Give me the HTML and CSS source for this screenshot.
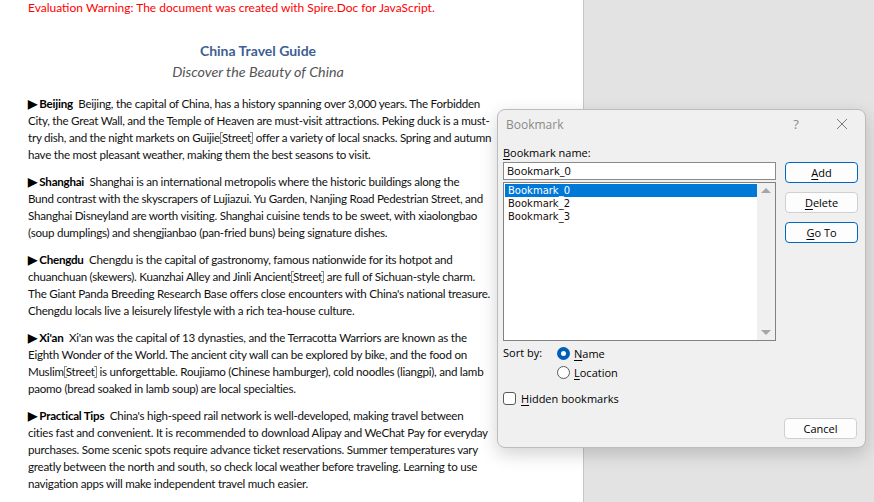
FILE: index.html
```html
<!DOCTYPE html>
<html lang="en">
<head>
    <meta charset="UTF-8">
    <meta name="viewport" content="width=device-width, initial-scale=1.0">
    <title>China Travel Guide - Bookmark</title>
    <link rel="stylesheet" href="styles.css">
</head>
<body>
    <div class="workspace">
        <main class="page">
            <p class="warning">Evaluation Warning: The document was created with Spire.Doc for JavaScript.</p>

            <h1 class="doc-title">China Travel Guide</h1>
            <p class="doc-subtitle">Discover the Beauty of China</p>

            <p class="para"><b>&#9654; Beijing</b>&nbsp; Beijing, the capital of China, has a history spanning over 3,000 years. The Forbidden<br>City, the Great Wall, and the Temple of Heaven are must-visit attractions. Peking duck is a must-<br>try dish, and the night markets on Guijie<span class="bm">Street</span> offer a variety of local snacks. Spring and autumn<br>have the most pleasant weather, making them the best seasons to visit.</p>

            <p class="para"><b>&#9654; Shanghai</b>&nbsp; Shanghai is an international metropolis where the historic buildings along the<br>Bund contrast with the skyscrapers of Lujiazui. Yu Garden, Nanjing Road Pedestrian Street, and<br>Shanghai Disneyland are worth visiting. Shanghai cuisine tends to be sweet, with xiaolongbao<br>(soup dumplings) and shengjianbao (pan-fried buns) being signature dishes.</p>

            <p class="para"><b>&#9654; Chengdu</b>&nbsp; Chengdu is the capital of gastronomy, famous nationwide for its hotpot and<br>chuanchuan (skewers). Kuanzhai Alley and Jinli Ancient<span class="bm">Street</span> are full of Sichuan-style charm.<br>The Giant Panda Breeding Research Base offers close encounters with China's national treasure.<br>Chengdu locals live a leisurely lifestyle with a rich tea-house culture.</p>

            <p class="para"><b>&#9654; Xi'an</b>&nbsp; Xi'an was the capital of 13 dynasties, and the Terracotta Warriors are known as the<br>Eighth Wonder of the World. The ancient city wall can be explored by bike, and the food on<br>Muslim<span class="bm">Street</span> is unforgettable. Roujiamo (Chinese hamburger), cold noodles (liangpi), and lamb<br>paomo (bread soaked in lamb soup) are local specialties.</p>

            <p class="para"><b>&#9654; Practical Tips</b>&nbsp; China's high-speed rail network is well-developed, making travel between<br>cities fast and convenient. It is recommended to download Alipay and WeChat Pay for everyday<br>purchases. Some scenic spots require advance ticket reservations. Summer temperatures vary<br>greatly between the north and south, so check local weather before traveling. Learning to use<br>navigation apps will make independent travel much easier.</p>
        </main>
        <div class="backdrop"></div>
    </div>

    <div class="dialog">
        <div class="dialog-title">
            <span class="dialog-name">Bookmark</span>
            <span class="title-btn help">?</span>
            <span class="title-btn close">
                <svg width="12" height="12" viewBox="0 0 12 12"><path d="M1 1L11 11M11 1L1 11" stroke="#7a7a7a" stroke-width="1"/></svg>
            </span>
        </div>

        <div class="dialog-body">
            <div class="left-col">
                <label class="field-label"><u>B</u>ookmark name:</label>
                <div class="name-input">Bookmark_0</div>
                <div class="list-box">
                    <ul class="list-items">
                        <li class="selected">Bookmark_0</li>
                        <li>Bookmark_2</li>
                        <li>Bookmark_3</li>
                    </ul>
                    <div class="scroll-track">
                        <span class="arrow up"></span>
                        <span class="arrow down"></span>
                    </div>
                </div>
            </div>
            <div class="right-col">
                <button class="btn primary"><u>A</u>dd</button>
                <button class="btn"><u>D</u>elete</button>
                <button class="btn primary"><u>G</u>o To</button>
            </div>
        </div>

        <div class="sort-row">
            <span class="sort-label">Sort by:</span>
            <div class="radios">
                <div class="radio-line"><span class="radio checked"></span><u>N</u>ame</div>
                <div class="radio-line"><span class="radio"></span><u>L</u>ocation</div>
            </div>
        </div>

        <div class="check-line"><span class="checkbox"></span><u>H</u>idden bookmarks</div>

        <div class="footer">
            <button class="btn">Cancel</button>
        </div>
    </div>
</body>
</html>
```

FILE: styles.css
```css
body {
    margin: 0;
    padding: 0;
    background-color: #e3e3e3;
    font-family: Lato, "Open Sans", sans-serif;
    overflow: hidden;
}

.workspace {
    display: flex;
    height: 502px;
}

.page {
    width: 584px;
    background-color: #fff;
    border-right: 1px solid #c6c6c6;
    padding: 0 0 0 28px;
    box-sizing: border-box;
    flex-shrink: 0;
}

.backdrop {
    flex: 1;
    background-color: #e3e3e3;
}

.warning {
    margin: 0;
    color: #f00;
    font-size: 12px;
    line-height: 16px;
    white-space: nowrap;
}

.doc-title {
    width: 460px;
    margin: 26px 0 0;
    text-align: center;
    color: #3e5f93;
    font-size: 14px;
    line-height: 18px;
    font-weight: bold;
}

.doc-subtitle {
    width: 460px;
    margin: 3px 0 0;
    text-align: center;
    color: #555;
    font-size: 14.3px;
    line-height: 18px;
    font-style: italic;
}

.para {
    margin: 14px 0 0;
    color: #111;
    font-size: 11.6px;
    letter-spacing: -0.25px;
    line-height: 17px;
    white-space: nowrap;
}

.para + .para {
    margin-top: 10px;
}

.para b {
    font-weight: bold;
    color: #000;
}

.bm {
    position: relative;
    padding: 0 2px;
}

.bm::before,
.bm::after {
    content: "";
    position: absolute;
    top: 1px;
    bottom: 0;
    width: 2px;
    border: 1px solid #8a8a8a;
}

.bm::before {
    left: 0;
    border-right: none;
}

.bm::after {
    right: 0;
    border-left: none;
}

/* dialog */

.dialog {
    position: absolute;
    left: 497px;
    top: 109px;
    width: 369px;
    height: 339px;
    box-sizing: border-box;
    background-color: #f0f0f0;
    border: 1px solid #bcbcbc;
    border-radius: 8px;
    box-shadow: 0 6px 18px rgba(0, 0, 0, 0.18);
    font-family: "Open Sans", "Noto Sans", sans-serif;
    font-size: 11px;
    color: #000;
}

.dialog u {
    text-decoration-thickness: 1px;
    text-underline-offset: 2px;
}

.dialog-title {
    display: flex;
    align-items: center;
    height: 28px;
    padding: 0 0 0 8px;
}

.dialog-name {
    flex: 1;
    color: #8a8a8a;
    font-size: 12px;
}

.title-btn {
    width: 46px;
    display: flex;
    justify-content: center;
    color: #8a8a8a;
    font-size: 13px;
}

.dialog-body {
    display: flex;
    gap: 9px;
    padding: 7px 0 0 5px;
}

.left-col {
    width: 273px;
}

.field-label {
    display: block;
    height: 17px;
    line-height: 16px;
}

.name-input {
    height: 18px;
    box-sizing: border-box;
    background-color: #fff;
    border: 1px solid #8a8a8a;
    padding: 0 3px;
    line-height: 16px;
}

.list-box {
    display: flex;
    height: 159px;
    margin-top: 2px;
    box-sizing: border-box;
    background-color: #fff;
    border: 1px solid #828282;
}

.list-items {
    flex: 1;
    list-style: none;
    margin: 0;
    padding: 1px 0 0 1px;
    font-family: "DejaVu Sans", sans-serif;
    font-size: 10px;
}

.list-items li {
    height: 13px;
    line-height: 13px;
    padding: 0 3px;
    color: #1a0a0a;
}

.list-items li.selected {
    background-color: #0078d7;
    color: #fff;
}

.scroll-track {
    width: 18px;
    background-color: #f0f0f0;
    display: flex;
    flex-direction: column;
    justify-content: space-between;
    align-items: center;
    padding: 5px 0;
}

.arrow {
    width: 0;
    height: 0;
    border-left: 5px solid transparent;
    border-right: 5px solid transparent;
}

.arrow.up {
    border-bottom: 5px solid #a6a6a6;
}

.arrow.down {
    border-top: 5px solid #a6a6a6;
}

.right-col {
    display: flex;
    flex-direction: column;
    gap: 9px;
    padding-top: 17px;
}

.btn {
    width: 73px;
    height: 21px;
    box-sizing: border-box;
    background-color: #fdfdfd;
    border: 1px solid #d0d0d0;
    border-radius: 4px;
    font-family: inherit;
    font-size: 11px;
    color: #000;
    padding: 0;
    line-height: 18px;
}

.btn.primary {
    border-color: #0067c0;
}

.sort-row {
    display: flex;
    padding: 3px 0 0 5px;
}

.sort-label {
    width: 54px;
    line-height: 18px;
}

.radios {
    display: flex;
    flex-direction: column;
    gap: 1px;
}

.radio-line {
    display: flex;
    align-items: center;
    height: 18px;
}

.radio {
    width: 13px;
    height: 13px;
    box-sizing: border-box;
    border: 1px solid #5a5a5a;
    border-radius: 50%;
    margin-right: 4px;
    background-color: #fff;
}

.radio.checked {
    border: 4px solid #005fb8;
}

.check-line {
    display: flex;
    align-items: center;
    height: 18px;
    padding: 8px 0 0 5px;
}

.checkbox {
    width: 13px;
    height: 13px;
    box-sizing: border-box;
    border: 1px solid #5a5a5a;
    border-radius: 3px;
    background-color: #fff;
    margin-right: 5px;
}

.footer {
    display: flex;
    justify-content: flex-end;
    padding: 11px 8px 0 0;
}
```
